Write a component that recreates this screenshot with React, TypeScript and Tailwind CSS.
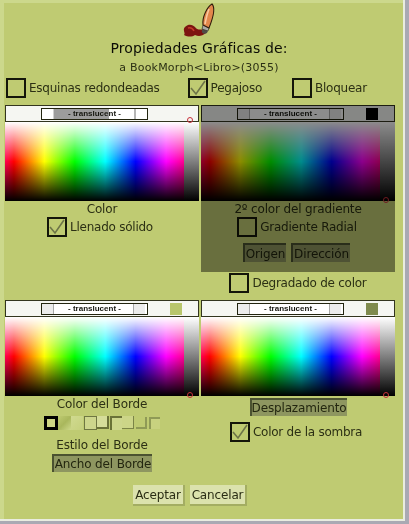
import React from "react";

const font = "font-['DejaVu_Sans',sans-serif]";

function CheckBox({ checked }: { checked?: boolean }) {
  return (
    <div className="w-5 h-5 shrink-0 border-2 border-[#14160a] flex items-center justify-center">
      {checked && (
        <svg width="16" height="16" viewBox="0 0 16 16" fill="none">
          <path d="M1 8 L6 14 L15 1" stroke="#6d7448" strokeWidth="1.6" />
        </svg>
      )}
    </div>
  );
}

function CheckRow({
  label,
  checked,
  className,
}: {
  label: string;
  checked?: boolean;
  className?: string;
}) {
  return (
    <div className={`flex items-center h-5 gap-[3px] ${className ?? ""}`}>
      <CheckBox checked={checked} />
      <span className="text-[12px] tracking-[-0.25px] text-[#2c3014] whitespace-nowrap">{label}</span>
    </div>
  );
}

function DarkButton({ label, className }: { label: string; className?: string }) {
  return (
    <div
      className={`flex items-center justify-center bg-[#8e9660] border-l-2 border-t-2 border-[#4b5230] text-[12px] tracking-[-0.15px] text-[#23260f] whitespace-nowrap ${className ?? ""}`}
    >
      {label}
    </div>
  );
}

function LightButton({ label, className }: { label: string; className?: string }) {
  return (
    <div
      className={`flex items-center justify-center h-[21px] bg-[#dbe2ad] border-r-2 border-b-2 border-[#a3ad62] text-[12px] tracking-[-0.15px] text-[#2a2d14] ${className ?? ""}`}
    >
      {label}
    </div>
  );
}

function Picker({
  swatch,
  marker,
  fill,
}: {
  swatch?: string;
  marker: string;
  fill: "top" | "rest";
}) {
  return (
    <div className="relative w-[194px] h-[96px] flex flex-col">
      <div className="relative h-[17px] bg-[#f5f6f2] border border-[#33351f] flex items-center">
        <div className="relative ml-[35px] w-[107px] h-[12px] bg-white border border-[#22240f] flex overflow-hidden">
          {fill === "top" ? (
            <>
              <div className="w-[12px] border-r border-[#cfcfcf]" />
              <div className="w-[55px] bg-[#9c9c9c]" />
              <div className="w-[25px]" />
              <div className="w-[2px] bg-[#b5b5b5]" />
            </>
          ) : (
            <>
              <div className="w-[12px] bg-[#ececec] border-r border-[#a8a8a8]" />
              <div className="w-[79px]" />
              <div className="w-[12px] bg-[#ececec] border-l border-[#a8a8a8]" />
            </>
          )}
          <span className="absolute inset-0 flex items-center justify-center font-['Liberation_Sans',sans-serif] text-[8px] font-bold leading-none text-[#15160f]">
            - translucent -
          </span>
        </div>
        {swatch && <div className={`ml-[22px] w-3 h-3 ${swatch}`} />}
      </div>
      <div className="flex-1 flex bg-black">
        <div className="flex-1 bg-[linear-gradient(to_bottom,#ffffff_0%,rgba(255,255,255,0)_50%,rgba(0,0,0,0)_50%,#000000_100%),linear-gradient(to_right,#ff0050_0%,#ff0000_5%,#ffff00_22%,#00ff00_39%,#00ffff_56%,#0000ff_73%,#ff00ff_90%,#ff0090_100%)]" />
        <div className="w-[15px] bg-[linear-gradient(to_bottom,#ffffff,#000000)]" />
      </div>
      <div className={`absolute left-[182px] w-[6px] h-[6px] rounded-full border border-[#c8303a] ${marker}`} />
    </div>
  );
}

function BorderStyles() {
  return (
    <div className="mt-[3px] flex items-center h-[15px]">
      <div className="w-[14px] h-[14px] border-[3px] border-black bg-[#cdd684]" />
      <div className="w-[13px] h-[14px] bg-[linear-gradient(135deg,#bfcb72,#a9b75c,#cdd88a)]" />
      <div className="w-[12px] h-[14px] bg-[linear-gradient(135deg,#d0da90,#c5d07c)]" />
      <div className="w-[13px] h-[14px] ml-[1px] border border-[#6f7742] bg-[#cdd68c]" />
      <div className="w-[12px] h-[13px] border-b-2 border-r-2 border-[#6a7238] bg-[#d5dd9a]" />
      <div className="w-[12px] h-[14px] ml-[1px] border-t-2 border-l-2 border-[#6a7238] bg-[#cdd68c]" />
      <div className="w-[12px] h-[13px] border-b border-r border-[#7b8447] bg-[#ccd588]" />
      <div className="w-[11px] h-[12px] ml-[2px] border-b-2 border-r-2 border-[#8f9a56]" />
      <div className="w-[11px] h-[12px] ml-[2px] border-t-2 border-l-2 border-[#8f9a56] bg-[#c8d27f]" />
    </div>
  );
}

function Brush() {
  return (
    <svg width="40" height="35" viewBox="0 0 40 35">
      <path d="M5 24 C9 20 13 22 15 24 C17 27 20 27 24 26 L26 30 C22 33 19 34 15 32 C12 34 8 34 4 32 C6 30 2 27 5 24Z" fill="#7d1410" />
      <path d="M8 25 C11 24 13 26 14 28" stroke="#c23a2a" strokeWidth="1.5" fill="none" />
      <path d="M22 27 C21 30 24 32 27 30 L29 25 L23 23Z" fill="#4e4c46" />
      <path d="M23 22 L29 25 L28 28 L22 26Z" fill="#a9a9a4" stroke="#2f2a20" strokeWidth="0.6" />
      <path d="M32 1 C36 5 33 15 29 25 L23 22 C22 14 27 4 32 1Z" fill="#e2874c" stroke="#2f1a0c" strokeWidth="1.1" />
      <path d="M29 6 C27 11 26 16 25 21" stroke="#f8c8a0" strokeWidth="1.6" fill="none" />
    </svg>
  );
}

export default function App() {
  return (
    <div className={`w-[409px] h-[524px] bg-[#a9a9b3] overflow-hidden blur-[0.35px] ${font}`}>
      <div className="w-[405px] h-[521px] border-r-2 border-b-2 border-[#e9ece0]">
        <div className="h-full border-l-[4px] border-t-[3px] border-[#ccd88c] bg-[#bfcb72]">
          <div className="w-[390px] flex flex-col items-center">
            <div className="h-[35px] ml-[2px]">
              <Brush />
            </div>
            <div className="h-5 flex items-center text-[14px] tracking-[0.1px] text-[#0c0d06]">
              Propiedades Gráficas de:
            </div>
            <div className="h-5 flex items-center text-[11px] tracking-[0.2px] text-[#2c3014]">
              a BookMorph&lt;Libro&gt;(3055)
            </div>
          </div>

          <div className="flex h-5 mb-[7px] pl-[2px]">
            <CheckRow label="Esquinas redondeadas" />
            <CheckRow label="Pegajoso" checked className="ml-[28px]" />
            <CheckRow label="Bloquear" className="ml-[30px]" />
          </div>

          <div className="pl-[1px] grid grid-cols-[194px_194px] gap-x-[2px] items-start">
            <div className="flex flex-col items-center">
              <Picker marker="top-[12px]" fill="top" />
              <div className="h-4 flex items-center text-[12px] tracking-[-0.15px] text-[#2c3014]">Color</div>
              <CheckRow label="Llenado sólido" checked className="-ml-[4px]" />
            </div>
            <div className="flex flex-col items-center">
              <div className="relative flex flex-col items-center w-[194px] h-[167px]">
                <Picker marker="top-[92px]" fill="rest" swatch="bg-black" />
                <div className="h-4 flex items-center text-[12px] tracking-[-0.15px] text-[#2c3014]">2º color del gradiente</div>
                <CheckRow label="Gradiente Radial" className="-ml-[2px]" />
                <div className="flex gap-[5px] mt-[6px] -ml-[3px]">
                  <DarkButton label="Origen" className="w-[43px] h-[19px]" />
                  <DarkButton label="Dirección" className="w-[59px] h-[19px]" />
                </div>
                <div className="absolute inset-0 bg-black/45" />
              </div>
              <CheckRow label="Degradado de color" className="mt-[1px]" />
            </div>
          </div>

          <div className="mt-[7px] pl-[1px] grid grid-cols-[194px_194px] gap-x-[2px] items-start">
            <div className="flex flex-col items-center">
              <Picker marker="top-[92px]" fill="rest" swatch="bg-[#b8c66c]" />
              <div className="h-4 flex items-center text-[12px] tracking-[-0.15px] text-[#2c3014]">Color del Borde</div>
              <BorderStyles />
              <div className="mt-[7px] h-[15px] flex items-center text-[12px] tracking-[-0.15px] text-[#2c3014]">Estilo del Borde</div>
              <DarkButton label="Ancho del Borde" className="mt-[2px] w-[100px] h-[18px]" />
            </div>
            <div className="flex flex-col items-center">
              <Picker marker="top-[92px]" fill="rest" swatch="bg-[#7f8a4e]" />
              <DarkButton label="Desplazamiento" className="mt-[2px] w-[97px] h-[18px]" />
              <CheckRow label="Color de la sombra" checked className="mt-[6px] -ml-[4px]" />
            </div>
          </div>

          <div className="flex gap-[5px] mt-[13px] ml-[129px]">
            <LightButton label="Aceptar" className="w-[52px]" />
            <LightButton label="Cancelar" className="w-[57px]" />
          </div>
        </div>
      </div>
    </div>
  );
}
